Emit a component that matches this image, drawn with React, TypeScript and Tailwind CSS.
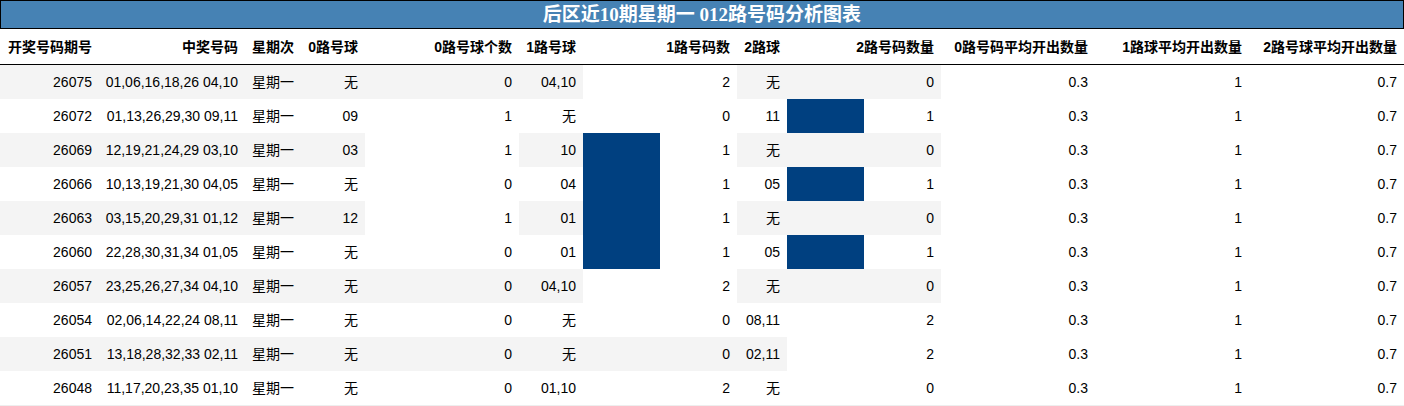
const rows = [
  ["26075", "01,06,16,18,26 04,10", "无", 0, "04,10", 2, "无", 0],
  ["26072", "01,13,26,29,30 09,11", "09", 1, "无", 0, "11", 1],
  ["26069", "12,19,21,24,29 03,10", "03", 1, "10", 1, "无", 0],
  ["26066", "10,13,19,21,30 04,05", "无", 0, "04", 1, "05", 1],
  ["26063", "03,15,20,29,31 01,12", "12", 1, "01", 1, "无", 0],
  ["26060", "22,28,30,31,34 01,05", "无", 0, "01", 1, "05", 1],
  ["26057", "23,25,26,27,34 04,10", "无", 0, "04,10", 2, "无", 0],
  ["26054", "02,06,14,22,24 08,11", "无", 0, "无", 0, "08,11", 2],
  ["26051", "13,18,28,32,33 02,11", "无", 0, "无", 0, "02,11", 2],
  ["26048", "11,17,20,23,35 01,10", "无", 0, "01,10", 2, "无", 0],
] as const;

const headers = [
  "开奖号码期号",
  "中奖号码",
  "星期次",
  "0路号球",
  "0路号球个数",
  "1路号球",
  "1路号码数",
  "2路球",
  "2路号码数量",
  "0路号码平均开出数量",
  "1路球平均开出数量",
  "2路号球平均开出数量",
];

const cols =
  "grid grid-cols-[99px_146px_56px_64px_154px_64px_154px_50px_154px_154px_154px_155px]";

// bar cells: 0 shows the stripe, 1 is a half bar, max is a white fill
function barBg(v: number, max: number) {
  if (v === 0) return "";
  if (v === max) return "bg-white";
  return "bg-[linear-gradient(90deg,#004080_50%,#ffffff_50%)]";
}

function Cell({ children, bg = "" }: { children: React.ReactNode; bg?: string }) {
  return (
    <div className={`flex items-center justify-end px-[7px] whitespace-nowrap ${bg}`}>
      {children}
    </div>
  );
}

export default function App() {
  return (
    <div className="w-[1404px] bg-white text-[14px] text-black font-['Liberation_Sans','Noto_Sans_CJK_SC',sans-serif]">
      <div className="h-[29px] border border-black bg-[#4682b4] flex items-center justify-center text-white font-bold text-[19px] leading-none font-['Liberation_Serif','Noto_Sans_CJK_SC',serif]">
        后区近10期星期一 012路号码分析图表
      </div>

      <div className={`${cols} h-[36px] border-b border-black font-bold`}>
        {headers.map((h) => (
          <div key={h} className="flex items-center justify-end px-[7px] pt-[2px] whitespace-nowrap">
            {h}
          </div>
        ))}
      </div>

      <div className="border-b border-[#eeeeee]">
        {rows.map((r, i) => (
          <div
            key={r[0]}
            className={`${cols} h-[34px] ${i % 2 === 0 ? "bg-[#f4f4f4]" : "bg-white"}`}
          >
            <Cell>{r[0]}</Cell>
            <Cell>{r[1]}</Cell>
            <Cell>星期一</Cell>
            <Cell>{r[2]}</Cell>
            <Cell bg={barBg(r[3], 1)}>{r[3]}</Cell>
            <Cell>{r[4]}</Cell>
            <Cell bg={barBg(r[5], 2)}>{r[5]}</Cell>
            <Cell>{r[6]}</Cell>
            <Cell bg={barBg(r[7], 2)}>{r[7]}</Cell>
            <Cell bg="bg-white">0.3</Cell>
            <Cell bg="bg-white">1</Cell>
            <Cell bg="bg-white">0.7</Cell>
          </div>
        ))}
      </div>
    </div>
  );
}
